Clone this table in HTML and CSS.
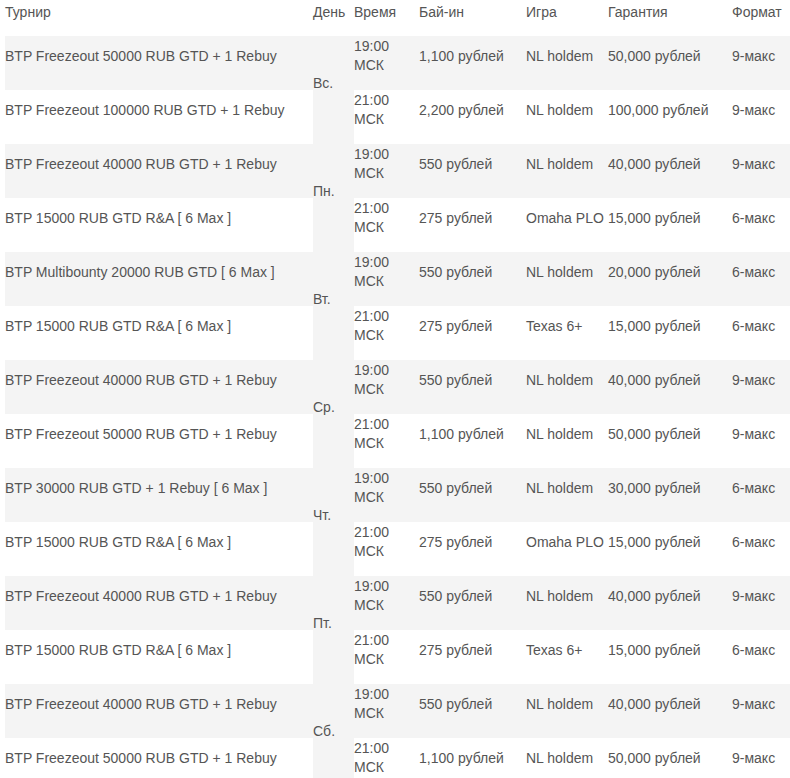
FILE: index.html
```html
<!DOCTYPE html>
<html lang="ru">
<head>
<meta charset="utf-8">
<title>Турниры</title>
<link rel="stylesheet" href="styles.css">
</head>
<body>
<table class="schedule">
  <colgroup>
    <col class="c-name"><col class="c-day"><col class="c-time"><col class="c-buy"><col class="c-game"><col class="c-gtd"><col class="c-fmt">
  </colgroup>
  <thead>
    <tr><th>Турнир</th><th>День</th><th>Время</th><th>Бай-ин</th><th>Игра</th><th>Гарантия</th><th>Формат</th></tr>
  </thead>
  <tbody>
    <tr class="odd"><td>BTP Freezeout 50000 RUB GTD + 1 Rebuy</td><td class="day" rowspan="2">Вс.</td><td>19:00<br>МСК</td><td>1,100 рублей</td><td>NL holdem</td><td>50,000 рублей</td><td>9-макс</td></tr>
    <tr><td>BTP Freezeout 100000 RUB GTD + 1 Rebuy</td><td>21:00<br>МСК</td><td>2,200 рублей</td><td>NL holdem</td><td>100,000 рублей</td><td>9-макс</td></tr>
    <tr class="odd"><td>BTP Freezeout 40000 RUB GTD + 1 Rebuy</td><td class="day" rowspan="2">Пн.</td><td>19:00<br>МСК</td><td>550 рублей</td><td>NL holdem</td><td>40,000 рублей</td><td>9-макс</td></tr>
    <tr><td>BTP 15000 RUB GTD R&amp;A [ 6 Max ]</td><td>21:00<br>МСК</td><td>275 рублей</td><td>Omaha PLO</td><td>15,000 рублей</td><td>6-макс</td></tr>
    <tr class="odd"><td>BTP Multibounty 20000 RUB GTD [ 6 Max ]</td><td class="day" rowspan="2">Вт.</td><td>19:00<br>МСК</td><td>550 рублей</td><td>NL holdem</td><td>20,000 рублей</td><td>6-макс</td></tr>
    <tr><td>BTP 15000 RUB GTD R&amp;A [ 6 Max ]</td><td>21:00<br>МСК</td><td>275 рублей</td><td>Texas 6+</td><td>15,000 рублей</td><td>6-макс</td></tr>
    <tr class="odd"><td>BTP Freezeout 40000 RUB GTD + 1 Rebuy</td><td class="day" rowspan="2">Ср.</td><td>19:00<br>МСК</td><td>550 рублей</td><td>NL holdem</td><td>40,000 рублей</td><td>9-макс</td></tr>
    <tr><td>BTP Freezeout 50000 RUB GTD + 1 Rebuy</td><td>21:00<br>МСК</td><td>1,100 рублей</td><td>NL holdem</td><td>50,000 рублей</td><td>9-макс</td></tr>
    <tr class="odd"><td>BTP 30000 RUB GTD + 1 Rebuy [ 6 Max ]</td><td class="day" rowspan="2">Чт.</td><td>19:00<br>МСК</td><td>550 рублей</td><td>NL holdem</td><td>30,000 рублей</td><td>6-макс</td></tr>
    <tr><td>BTP 15000 RUB GTD R&amp;A [ 6 Max ]</td><td>21:00<br>МСК</td><td>275 рублей</td><td>Omaha PLO</td><td>15,000 рублей</td><td>6-макс</td></tr>
    <tr class="odd"><td>BTP Freezeout 40000 RUB GTD + 1 Rebuy</td><td class="day" rowspan="2">Пт.</td><td>19:00<br>МСК</td><td>550 рублей</td><td>NL holdem</td><td>40,000 рублей</td><td>9-макс</td></tr>
    <tr><td>BTP 15000 RUB GTD R&amp;A [ 6 Max ]</td><td>21:00<br>МСК</td><td>275 рублей</td><td>Texas 6+</td><td>15,000 рублей</td><td>6-макс</td></tr>
    <tr class="odd"><td>BTP Freezeout 40000 RUB GTD + 1 Rebuy</td><td class="day" rowspan="2">Сб.</td><td>19:00<br>МСК</td><td>550 рублей</td><td>NL holdem</td><td>40,000 рублей</td><td>9-макс</td></tr>
    <tr><td>BTP Freezeout 50000 RUB GTD + 1 Rebuy</td><td>21:00<br>МСК</td><td>1,100 рублей</td><td>NL holdem</td><td>50,000 рублей</td><td>9-макс</td></tr>
  </tbody>
</table>
</body>
</html>
```
FILE: styles.css
```css
html, body {
  margin: 0;
  padding: 0;
  overflow: hidden;
  background: #fff;
}
body {
  padding-left: 5px;
  font-family: "Liberation Sans", Arial, sans-serif;
  font-size: 14px;
  color: #555;
}
.schedule {
  border-collapse: collapse;
  table-layout: fixed;
  width: 787px;
}
.c-name { width: 308px; }
.c-day { width: 41px; }
.c-time { width: 65px; }
.c-buy { width: 107px; }
.c-game { width: 82px; }
.c-gtd { width: 124px; }
.c-fmt { width: 60px; }
.schedule th,
.schedule td {
  padding: 1px 0 15px 0;
  text-align: left;
  vertical-align: middle;
  line-height: 19px;
  font-weight: normal;
  white-space: nowrap;
}
.schedule th {
  padding: 2px 0 14px 0;
}
.schedule thead tr { height: 36px; }
.schedule tbody tr { height: 54px; }
.schedule tr.odd td { background: #f4f4f4; }
.schedule td.day { background: #f4f4f4; }
```
